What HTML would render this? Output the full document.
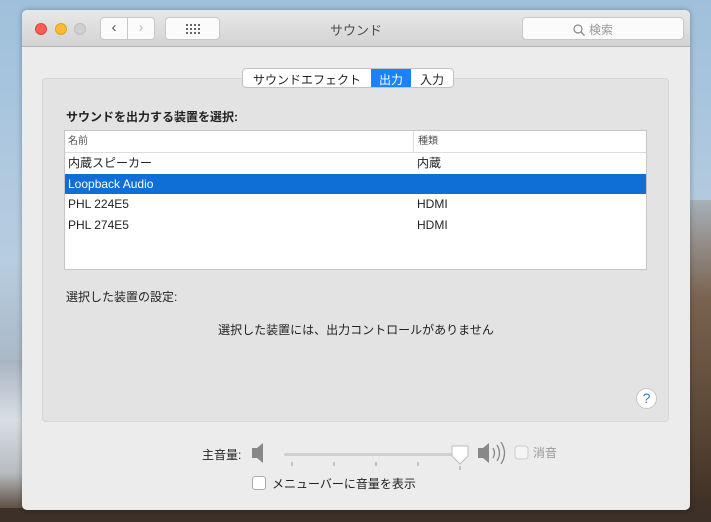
<!DOCTYPE html>
<html><head><meta charset="utf-8"><style>
*{margin:0;padding:0;box-sizing:border-box}
body{width:711px;height:522px;overflow:hidden;position:relative;font-family:"Liberation Sans","Noto Sans CJK JP",sans-serif;font-size:12px;color:#222;
background:linear-gradient(180deg,#9fc0dc 0%,#b7cde0 50%,#a9b8c6 70%,#6b5a48 90%,#4a3a2c 100%)}
.bgl{position:absolute;left:0;top:360px;width:40px;height:150px;background:linear-gradient(180deg,#a8b4c2,#d8dee4 40%,#b8bcc0 75%,#5a4a3c)}
.bgr{position:absolute;right:0;top:200px;width:30px;height:322px;background:linear-gradient(180deg,#a8b0b8,#7a6450 30%,#5a4634 70%,#3a2c22)}
.bgb{position:absolute;left:0;top:508px;width:711px;height:14px;background:#3c3028}
.win{position:absolute;left:22px;top:10px;width:668px;height:500px;background:#ececec;border-radius:5px;overflow:hidden;box-shadow:0 0 6px rgba(0,0,0,.3)}
.tb{height:37px;background:linear-gradient(#e8e8e8,#d3d3d3);border-bottom:1px solid #b4b4b4;position:relative}
.dot{position:absolute;top:13px;width:12px;height:12px;border-radius:50%}
.btn{position:absolute;top:7px;height:23px;background:#fbfbfb;border:1px solid #c8c8c8;border-radius:4px}
.title{position:absolute;left:0;right:0;top:10px;text-align:center;font-size:13px;color:#4d4d4d}
.panel{position:absolute;left:20px;top:68px;width:627px;height:344px;background:#e3e3e3;border:1px solid #d6d6d6;border-radius:4px}
.seg{position:absolute;left:220px;top:58px;height:20px;display:flex;border:1px solid #c2c2c2;border-radius:4px;background:#fff;overflow:hidden;font-size:12px;z-index:2}
.seg div{padding:2px 10px 0}
.tbl{position:absolute;left:42px;top:120px;width:583px;height:140px;background:#fff;border:1px solid #c6c6c6}
.row{height:20.5px;line-height:20px;position:relative;padding-left:3px;font-size:12px}
.row span{position:absolute;left:352px}
</style></head><body>
<div class="bgl"></div><div class="bgr"></div><div class="bgb"></div>
<div class="win">
<div class="tb">
<div class="dot" style="left:13px;background:#fc5f57;border:1px solid #e0443e"></div>
<div class="dot" style="left:33px;background:#fdbc2e;border:1px solid #dea123"></div>
<div class="dot" style="left:52px;background:#cfcfcf;border:1px solid #bdbdbd"></div>
<div class="btn" style="left:78px;width:28px;border-radius:4px 0 0 4px;text-align:center;font-size:15px;line-height:20px;color:#555">&#x2039;</div>
<div class="btn" style="left:105px;width:28px;border-radius:0 4px 4px 0;text-align:center;font-size:15px;line-height:20px;color:#bbb">&#x203A;</div>
<div class="btn" style="left:143px;width:55px"><svg width="55" height="21"><g fill="#666"><rect x="20" y="6" width="2" height="2"/><rect x="24" y="6" width="2" height="2"/><rect x="28" y="6" width="2" height="2"/><rect x="32" y="6" width="2" height="2"/><rect x="20" y="10" width="2" height="2"/><rect x="24" y="10" width="2" height="2"/><rect x="28" y="10" width="2" height="2"/><rect x="32" y="10" width="2" height="2"/><rect x="20" y="14" width="2" height="2"/><rect x="24" y="14" width="2" height="2"/><rect x="28" y="14" width="2" height="2"/><rect x="32" y="14" width="2" height="2"/></g></svg></div>
<div class="title">サウンド</div>
<div class="btn" style="left:500px;width:162px;font-size:12px;color:#999;padding:3px 0 0 50px"><svg width="12" height="12" style="vertical-align:-2px;margin-right:4px"><circle cx="5" cy="5" r="4" fill="none" stroke="#888" stroke-width="1.2"/><line x1="8" y1="8" x2="11.5" y2="11.5" stroke="#888" stroke-width="1.3"/></svg>検索</div>
</div>
<div class="panel"></div>
<div class="seg"><div>サウンドエフェクト</div><div style="background:#1a82fb;color:#fff;padding:2px 8px 0">出力</div><div style="padding:2px 9px 0">入力</div></div>
<div style="position:absolute;left:44px;top:98px;font-weight:bold;font-size:12px">サウンドを出力する装置を選択:</div>
<div class="tbl">
<div class="row" style="height:22px;border-bottom:1px solid #ddd;font-size:10px;color:#555;line-height:21px">名前<span style="border-left:1px solid #ddd;padding-left:4px;left:348px">種類</span></div>
<div class="row">内蔵スピーカー<span>内蔵</span></div>
<div class="row" style="background:#0f6fd6;color:#fff">Loopback Audio</div>
<div class="row">PHL 224E5<span>HDMI</span></div>
<div class="row">PHL 274E5<span>HDMI</span></div>
</div>
<div style="position:absolute;left:44px;top:278px">選択した装置の設定:</div>
<div style="position:absolute;left:0;width:668px;top:311px;text-align:center">選択した装置には、出力コントロールがありません</div>
<div style="position:absolute;left:614px;top:378px;width:21px;height:21px;border-radius:50%;background:#fff;border:1px solid #c6c6c6;color:#2a7de1;text-align:center;line-height:19px;font-size:14px">?</div>
<div style="position:absolute;left:180px;top:436px">主音量:</div>
<svg style="position:absolute;left:228px;top:432px" width="360" height="40">
<path d="M2 6h5l6-5v20l-6-5H2z" fill="#888"/>
<rect x="34" y="11" width="176" height="3" rx="1.5" fill="#cfcfcf"/>
<g stroke="#999"><line x1="42" y1="20" x2="42" y2="24"/><line x1="84" y1="20" x2="84" y2="24"/><line x1="126" y1="20" x2="126" y2="24"/><line x1="168" y1="20" x2="168" y2="24"/><line x1="210" y1="24" x2="210" y2="28"/></g>
<path d="M202 4h16v10l-8 8-8-8z" fill="#fff" stroke="#bbb"/>
<path d="M228 6h5l6-5v20l-6-5h-5z" fill="#888"/>
<g fill="none" stroke="#888" stroke-width="1.3"><path d="M243 6q3 5 0 10"/><path d="M247 3q5 8 0 16"/><path d="M251 0q7 11 0 22"/></g>
<rect x="265" y="4" width="13" height="13" rx="3" fill="#f4f4f4" stroke="#ccc"/>
<text x="283" y="15" font-size="12" fill="#999" font-family="Liberation Sans,Noto Sans CJK JP,sans-serif">消音</text>
</svg>
<div style="position:absolute;left:230px;top:466px;width:14px;height:14px;border:1px solid #aaa;border-radius:3px;background:#fff"></div>
<div style="position:absolute;left:250px;top:465px">メニューバーに音量を表示</div>
</div>
</body></html>
